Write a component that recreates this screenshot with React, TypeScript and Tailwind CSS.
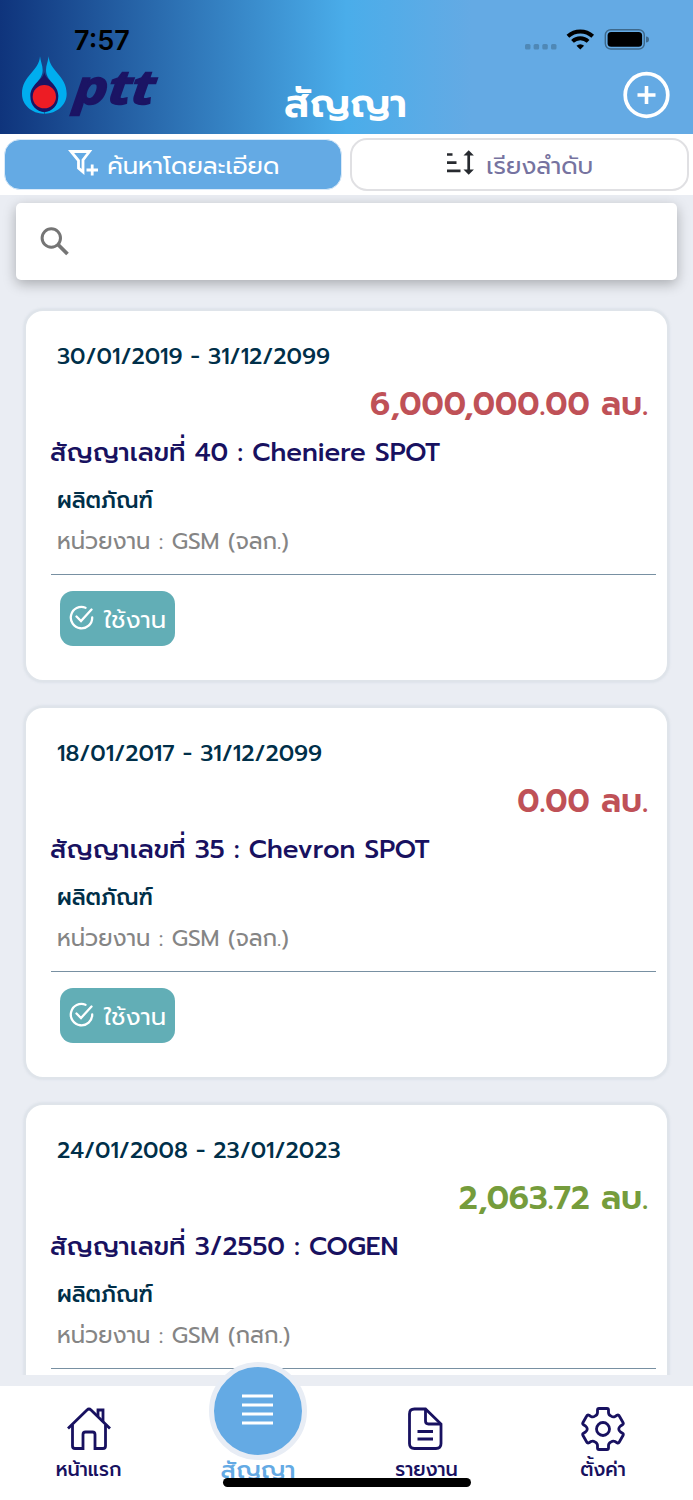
import type { ReactNode } from "react";

const FONT = "font-['Prompt','Inter','Noto_Sans_Thai','Noto_Sans',sans-serif]";

type Contract = {
  dates: string;
  amount: string;
  amountClass: string;
  number: string;
  name: string;
  unit: string;
  status?: string;
};

const contracts: Contract[] = [
  { dates: "30/01/2019 - 31/12/2099", amount: "6,000,000.00", amountClass: "text-[#bf5157]", number: "40", name: "Cheniere SPOT", unit: "จลก.", status: "ใช้งาน" },
  { dates: "18/01/2017 - 31/12/2099", amount: "0.00", amountClass: "text-[#bf5157]", number: "35", name: "Chevron SPOT", unit: "จลก.", status: "ใช้งาน" },
  { dates: "24/01/2008 - 23/01/2023", amount: "2,063.72", amountClass: "text-[#759c3c]", number: "3/2550", name: "COGEN", unit: "กสก." },
];

function Logo() {
  return (
    <svg width="140" height="70" viewBox="30 12 420 210" className="block overflow-visible">
      <path d="M103 66C106 92 148 102 148 141A45 45 0 0 1 58 141C58 102 100 92 103 66Z" fill="#1b1464" />
      <g fill="#00aeef">
        <path d="M90 19C88 62 36 78 36 131C36 166 66 190 102 191V187C80 184 61 168 61 138C61 102 98 94 98 60C98 46 92 36 90 19Z" />
        <path d="M116 19C118 62 170 78 170 131C170 166 140 190 104 191V187C126 184 145 168 145 138C145 102 108 94 108 60C108 46 114 36 116 19Z" />
      </g>
      <circle cx="103" cy="140" r="35" fill="#ed1c24" />
      <g transform="translate(190 163) skewX(-5)">
        <text x="0" y="0" textLength="242" lengthAdjust="spacingAndGlyphs" fill="#1b1464" stroke="#1b1464" strokeWidth="5" className="font-['Open_Sans'] text-[142px] font-bold italic">ptt</text>
      </g>
    </svg>
  );
}

function Header() {
  return (
    <header className="h-[134px] shrink-0 bg-[linear-gradient(90deg,#0f347c_0%,#4aadea_50%,#64aae4_68%,#64aae4_100%)]">
      <div className="flex h-[54px] items-end justify-between pl-[74px] pr-[44px]">
        <span className="font-['Inter'] text-[27px] font-semibold leading-[27px] text-black">7:57</span>
        <svg width="126" height="30" viewBox="0 0 126 30">
          <g fill="#4f88b6">
            <rect x="2" y="20" width="5.500" height="5.500" rx="1.500" />
            <rect x="10.600" y="20" width="5.500" height="5.500" rx="1.500" />
            <rect x="19.300" y="20" width="5.500" height="5.500" rx="1.500" />
            <rect x="28" y="20" width="5.500" height="5.500" rx="1.500" />
          </g>
          <g fill="none" stroke="#000" strokeWidth="4">
            <path d="M44.900 12.300 A18.500 18.500 0 0 1 69.700 12.300" />
            <path d="M49.500 17.400 A11.500 11.500 0 0 1 65.100 17.400" />
          </g>
          <path d="M57.300 25.500 L53.500 21.700 A5.500 5.500 0 0 1 61.100 21.700 Z" />
          <rect x="82.300" y="5.700" width="39" height="19.300" rx="5.500" fill="none" stroke="#3d688b" strokeWidth="1.400" />
          <rect x="84.600" y="8" width="34.500" height="14.700" rx="3.500" />
          <path d="M123 12.500 a3 3 0 0 1 0 6 Z" fill="#3d688b" />
        </svg>
      </div>
      <div className="flex h-[80px] items-start justify-between pl-5 pr-[22px]">
        <Logo />
        <h1 className="mt-[22px] flex w-[126px] justify-center whitespace-nowrap text-[40px] font-semibold leading-[56px] text-white">สัญญา</h1>
        <div className="flex w-[140px] justify-end pt-[17px]">
          <svg width="48" height="48" viewBox="0 0 48 48" fill="none" stroke="#fff">
            <circle cx="23.500" cy="24" r="21.300" strokeWidth="3.700" />
            <path d="M14.500 24H32.500M23.500 15V33" strokeWidth="3.600" />
          </svg>
        </div>
      </div>
    </header>
  );
}

function Toolbar() {
  return (
    <div className="flex h-[61px] shrink-0 gap-2 bg-white pl-1 pr-1 pt-1">
      <button className="mt-px flex h-[51px] w-[338px] items-center justify-center gap-2 rounded-[16px] border border-[#d9eaf9] bg-[#64aae4] pl-[2px] text-white">
        <svg width="31" height="30" viewBox="0 0 31 30" fill="none" stroke="#fff" strokeWidth="2.800" className="-mt-1">
          <path d="M3 3.500H21.500L15 12V24L10.500 20V12.500Z" />
          <path d="M18.500 22H30M24.200 16.500V27.500" />
        </svg>
        <span className="mt-[3px] whitespace-nowrap text-[24.300px] leading-[36px]">ค้นหาโดยละเอียด</span>
      </button>
      <button className="flex h-[53px] w-[340px] items-center justify-center gap-[11px] rounded-[17px] border-2 border-[#e0e0e3] bg-white pl-px text-[#7673a0]">
        <svg width="29" height="28" viewBox="0 0 29 28" fill="none" stroke="#272a2f" strokeWidth="2.700" className="-mt-[5px]">
          <path d="M1 6.500H6.500M1 14.700H10.500M1 22.900H14.500M22.700 5V24" />
          <path d="M17.500 7.500L22.700 2.200L27.900 7.500ZM17.500 21.500L22.700 26.800L27.900 21.500Z" fill="#272a2f" stroke="none" />
        </svg>
        <span className="mt-[3px] whitespace-nowrap text-[24.300px] leading-[36px]">เรียงลำดับ</span>
      </button>
    </div>
  );
}

function SearchBox() {
  return (
    <div className="mx-4 mt-2 flex h-[77px] shrink-0 items-center rounded-[5px] bg-white pl-[22px] shadow-[0_4px_13px_rgba(0,0,0,0.28)]">
      <svg width="34" height="34" viewBox="0 0 34 34" fill="none" stroke="#757575">
        <circle cx="13.300" cy="13" r="9.200" strokeWidth="3" />
        <path d="M20 19.500L29.500 29" strokeWidth="3.800" />
      </svg>
    </div>
  );
}

function ContractCard({ contract }: { contract: Contract }) {
  return (
    <article className="h-[373px] shrink-0 rounded-[19px] border-2 border-[#dfe4ea] bg-white pl-[25px] pr-[11px] pt-[27px] text-[#002f49] shadow-[0_0_2px_1px_rgba(200,208,218,0.35)]">
      <p className="h-[38px] pl-[6px] text-[22.600px] font-medium leading-[37px]">{contract.dates}</p>
      <p className={`h-[58px] pr-[8px] text-right text-[32.300px] font-semibold leading-[58px] ${contract.amountClass}`}>{contract.amount} ลบ.</p>
      <h2 className="-ml-px h-[38px] whitespace-nowrap text-[25.850px] font-medium leading-[38px] text-[#181160]">
        สัญญาเลขที่ {contract.number} : {contract.name}
      </h2>
      <p className="mt-[9px] h-[39px] pl-[6px] text-[22.500px] font-medium leading-[38px]">ผลิตภัณฑ์</p>
      <p className="mt-[3px] h-[38px] pl-[6px] text-[22.700px] leading-[38px] text-[#858585]">หน่วยงาน : GSM ({contract.unit})</p>
      <div className="mt-[13px] h-px bg-[#7890a2]" />
      {contract.status && (
        <div className="ml-[9px] mt-[16px] flex h-[55px] w-[115px] items-center gap-[10px] rounded-[13px] bg-[#62aeb6] pl-[9px] text-white">
          <svg width="25" height="25" viewBox="0 0 25 25" fill="none" stroke="#fff" strokeWidth="2.300" strokeLinecap="round" className="-mt-[3px] shrink-0">
            <path d="M16.500 2.700A10.700 10.700 0 1 0 23.200 12.500M7.500 11.500L12 16L22.500 4.500" />
          </svg>
          <span className="mt-[2px] whitespace-nowrap text-[24.300px] leading-[36px]">{contract.status}</span>
        </div>
      )}
    </article>
  );
}

function NavItem({ label, width, children }: { label: string; width: string; children: ReactNode }) {
  return (
    <div className={`flex flex-col items-center pt-[20px] text-[#181160] ${width}`}>
      {children}
      <span className="mt-[2px] whitespace-nowrap text-[19.200px] font-medium leading-[32px]">{label}</span>
    </div>
  );
}

function BottomNav() {
  return (
    <nav className="relative mt-[11px] flex h-[114px] shrink-0 bg-white">
      <NavItem label="หน้าแรก" width="w-[177px]">
        <svg width="46" height="46" viewBox="0 0 46 46" fill="none" stroke="currentColor" strokeWidth="2.800">
          <path d="M2 22.500L21 4Q23 2 25 4L44 22.500" />
          <path d="M6.500 19V40Q6.500 42.500 9 42.500H17V28.500Q17 26 19.500 26H26.500Q29 26 29 28.500V42.500H37Q39.500 42.500 39.500 40V19" />
          <path d="M32 10V4H37V16" />
        </svg>
      </NavItem>
      <div className="flex w-[162px] flex-col items-center pt-[66px]">
        <span className="whitespace-nowrap text-[24.300px] font-medium leading-[36px] text-[#64aae4]">สัญญา</span>
      </div>
      <div className="absolute left-[209px] top-[-24px] flex h-[98px] w-[98px] items-center justify-center rounded-full border-[5px] border-[#e8edf5] bg-[#64aae4]">
        <svg width="33" height="32" viewBox="0 0 33 32" stroke="#fff" strokeWidth="3" className="-mt-1">
          <path d="M0 3H31M0 12H31M0 21H31M0 30H31" />
        </svg>
      </div>
      <NavItem label="รายงาน" width="w-[175px]">
        <svg width="46" height="46" viewBox="0.5 0 46 46" fill="none" stroke="currentColor" strokeWidth="2.800">
          <path d="M22 3H11Q6 3 6 8V37.500Q6 42.500 11 42.500H32.500Q37.500 42.500 37.500 37.500V18Z" />
          <path d="M22 3V15Q22 18 25 18H37.500M14 25.500H29.500M14 33H29.500" />
        </svg>
      </NavItem>
      <NavItem label="ตั้งค่า" width="w-[178px]">
        <svg width="46" height="46" viewBox="0 0 46 46" fill="none" stroke="currentColor" strokeWidth="2.800" strokeLinejoin="round">
          <path d="M19 2.500H27Q28.500 2.500 28.500 4V6.500Q28.500 9 31 10Q33 11.500 35 10.500L37 9.300Q38.500 8.500 39.300 10L43 16.500Q43.800 18 42.500 18.800L40.500 20Q37 23 40.500 26L42.500 27.200Q43.800 28 43 29.500L39.300 36Q38.500 37.500 37 36.700L35 35.500Q33 34.500 31 36Q28.500 37 28.500 39.500V42Q28.500 43.500 27 43.500H19Q17.500 43.500 17.500 42V39.500Q17.500 37 15 36Q13 34.500 11 35.500L9 36.700Q7.500 37.500 6.700 36L3 29.500Q2.200 28 3.500 27.200L5.500 26Q9 23 5.500 20L3.500 18.800Q2.200 18 3 16.500L6.700 10Q7.500 8.500 9 9.300L11 10.500Q13 11.500 15 10Q17.500 9 17.500 6.500V4Q17.500 2.500 19 2.500Z" />
          <circle cx="23" cy="23" r="6.500" />
        </svg>
      </NavItem>
      <div className="absolute left-[223px] top-[92px] h-[9px] w-[248px] rounded-full bg-black" />
    </nav>
  );
}

export default function App() {
  return (
    <div className={`flex h-[1500px] w-[693px] flex-col overflow-hidden bg-[#eaedf3] ${FONT}`}>
      <Header />
      <Toolbar />
      <main className="flex h-[1180px] shrink-0 flex-col overflow-hidden">
        <SearchBox />
        <div className="mt-[29px] flex flex-col gap-[24px] px-6">
          {contracts.map((contract) => (
            <ContractCard key={contract.number} contract={contract} />
          ))}
        </div>
      </main>
      <BottomNav />
    </div>
  );
}
